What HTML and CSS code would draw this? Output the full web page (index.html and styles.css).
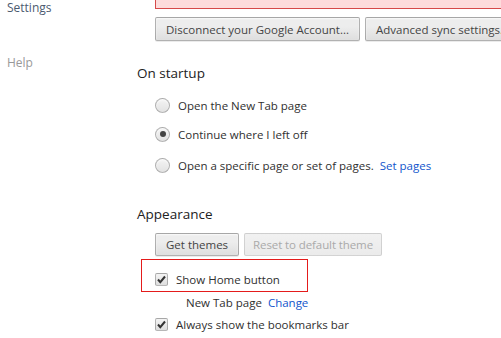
FILE: index.html
```html
<!DOCTYPE html>
<html>
<head>
<meta charset="utf-8">
<link rel="stylesheet" href="styles.css">
</head>
<body>
<div class="page">
  <nav class="sidebar">
    <div class="nav-title">Settings</div>
    <div class="nav-item">Help</div>
  </nav>
  <main class="main">
    <div class="sync">
      <div class="banner"></div>
      <div class="btn-row">
        <button class="btn">Disconnect your Google Account...</button>
        <button class="btn">Advanced sync settings...</button>
      </div>
    </div>

    <section class="section startup">
      <h3 class="sec-title">On startup</h3>
      <div class="radio-list">
        <label class="opt opt-1"><span class="radio"></span><span>Open the New Tab page</span></label>
        <label class="opt opt-2"><span class="radio checked"></span><span>Continue where I left off</span></label>
        <label class="opt opt-3"><span class="radio"></span><span>Open a specific page or set of pages.</span><a class="link">Set pages</a></label>
      </div>
    </section>

    <section class="section appearance">
      <h3 class="sec-title">Appearance</h3>
      <div class="btn-row">
        <button class="btn">Get themes</button>
        <button class="btn btn-reset" disabled>Reset to default theme</button>
      </div>
      <div class="check-row home">
        <span class="highlight"></span>
        <span class="checkbox checked"><svg viewBox="0 0 13 13" width="13" height="13"><path d="M3 6.5 L5.3 9.2 L10 3.5" fill="none" stroke="#333" stroke-width="2"/></svg></span>
        <span>Show Home button</span>
      </div>
      <div class="home-page"><span>New Tab page</span><a class="link">Change</a></div>
      <div class="check-row">
        <span class="checkbox checked"><svg viewBox="0 0 13 13" width="13" height="13"><path d="M3 6.5 L5.3 9.2 L10 3.5" fill="none" stroke="#333" stroke-width="2"/></svg></span>
        <span>Always show the bookmarks bar</span>
      </div>
    </section>
  </main>
</div>
</body>
</html>
```
FILE: styles.css
```css
* { box-sizing: border-box; }
html, body { margin: 0; padding: 0; background: #fff; overflow: hidden; }
body {
  font-family: "Open Sans", "Noto Sans", sans-serif;
  font-size: 11.5px;
  color: #303030;
}
.page { display: flex; width: 501px; height: 338px; }
.sidebar { width: 137px; flex: none; padding-left: 7px; }
.nav-title { font-size: 12px; line-height: 14px; margin-top: 1px; color: #4c5a70; }
.nav-item { font-size: 12px; line-height: 14px; margin-top: 41px; color: #999; }
.main { flex: 1; min-width: 0; }

.sync { padding-left: 18px; }
.banner {
  height: 9px;
  background: #fddcdc;
  border: 1px solid #d64a4a;
  border-top: none;
  margin-right: -20px;
}
.btn-row { display: flex; gap: 5px; white-space: nowrap; }
.sync .btn-row { margin-top: 8px; }
.btn {
  font-family: inherit;
  font-size: 11.5px;
  color: #444;
  height: 24px;
  padding: 0 10px;
  border: 1px solid rgba(0,0,0,0.25);
  border-radius: 2px;
  background: linear-gradient(#ededed, #ededed 38%, #dedede);
  box-shadow: 0 1px 0 rgba(0,0,0,0.08), inset 0 1px 2px rgba(255,255,255,0.75);
  flex: none;
}
.btn[disabled] { color: #aaa; border-color: rgba(0,0,0,0.12); background: linear-gradient(#f1f1f1, #ebebeb); box-shadow: none; }
.btn-reset { padding: 0 8px; letter-spacing: -0.1px; }

.sec-title { font-size: 13.5px; font-weight: normal; margin: 0; line-height: 18px; color: #222; }
.startup { margin-top: 23px; }
.radio-list { padding-left: 18px; display: flex; flex-direction: column; }
.opt { display: flex; align-items: center; gap: 8px; height: 16px; }
.opt-1 { margin-top: 15px; }
.opt-2 { margin-top: 13px; }
.opt-3 { margin-top: 15px; }
.radio {
  width: 15px; height: 15px; border-radius: 50%; flex: none;
  border: 1px solid rgba(0,0,0,0.25);
  background: linear-gradient(#f4f4f4, #e2e2e2);
  box-shadow: inset 0 1px 2px rgba(255,255,255,0.75);
  display: flex; align-items: center; justify-content: center;
}
.radio.checked::after { content: ""; width: 6px; height: 6px; border-radius: 50%; background: #444; }
.link { color: #15c; cursor: pointer; }
.opt .link { margin-left: -2px; }

.appearance { margin-top: 32px; }
.appearance .btn-row { padding-left: 18px; margin-top: 10px; }
.appearance .btn { height: 23px; }
.check-row { position: relative; display: flex; align-items: center; gap: 8px; padding-left: 18px; height: 14px; }
.home { margin-top: 16px; }
.highlight {
  position: absolute; left: 4px; top: -13px; width: 167px; height: 33px;
  border: 1px solid #e41b1b; pointer-events: none;
}
.checkbox {
  width: 13px; height: 13px; flex: none; border-radius: 2px;
  border: 1px solid rgba(0,0,0,0.25);
  background: linear-gradient(#f4f4f4, #dedede);
  display: flex; align-items: center; justify-content: center;
}
.checkbox svg { display: block; margin: -1px; }
.home-page { padding-left: 49px; margin-top: 10px; line-height: 14px; }
.home-page .link { margin-left: 6px; }
.home-page + .check-row { margin-top: 7px; }
```
